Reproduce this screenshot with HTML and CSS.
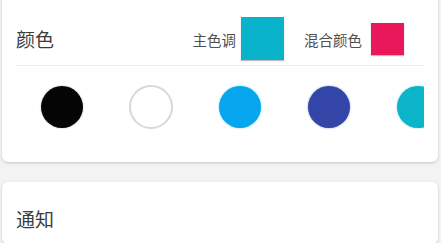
FILE: index.html
```html
<!DOCTYPE html>
<html lang="zh">
<head>
<meta charset="utf-8">
<link rel="stylesheet" href="styles.css">
</head>
<body>
<section class="card card-color">
  <div class="header">
    <span class="title">颜色</span>
    <div class="pickers">
      <span class="label">主色调</span>
      <span class="swatch swatch-primary"></span>
      <span class="label label-mix">混合颜色</span>
      <span class="swatch swatch-accent"></span>
    </div>
  </div>
  <div class="circles">
    <span class="dot dot-black"></span>
    <span class="dot dot-white"></span>
    <span class="dot dot-blue"></span>
    <span class="dot dot-indigo"></span>
    <span class="dot dot-teal"></span>
  </div>
</section>
<section class="card card-notice">
  <div class="header header-notice">
    <span class="title">通知</span>
  </div>
</section>
</body>
</html>
```
FILE: styles.css
```css
html, body {
  margin: 0;
  padding: 0;
}
body {
  background: #f3f3f3;
  font-family: "Noto Sans CJK SC", "Noto Sans", sans-serif;
  width: 441px;
  height: 243px;
  overflow: hidden;
}
.card {
  background: #fff;
  margin: 0 3px 0 2px;
  border-radius: 6px;
  box-shadow: 0 1px 3px rgba(0,0,0,0.18);
  padding: 0 14px;
}
.card-color {
  margin-top: -8px;
  padding-top: 8px;
}
.header {
  display: flex;
  align-items: center;
  justify-content: space-between;
  padding: 17px 0 5px;
  border-bottom: 1px solid #ececec;
}
.title {
  font-size: 19px;
  color: #3c3c3c;
  line-height: 24px;
  margin-top: 1px;
}
.pickers {
  display: flex;
  align-items: center;
}
.label {
  font-size: 14.5px;
  color: #505050;
  margin-top: 1px;
}
.swatch {
  display: block;
  box-shadow: 0 1px 1px rgba(0,0,0,0.25);
}
.swatch-primary {
  width: 43px;
  height: 43px;
  background: #08b3cb;
  margin-left: 5px;
}
.label-mix {
  margin-left: 20px;
}
.swatch-accent {
  width: 33px;
  height: 32px;
  background: #e9185b;
  margin-left: 9px;
  margin-right: 20px;
}
.circles {
  display: flex;
  gap: 47px;
  padding: 20px 0 34px 25px;
  overflow: hidden;
}
.dot {
  flex: none;
  width: 42px;
  height: 42px;
  border-radius: 50%;
  box-sizing: border-box;
}
.dot-black { background: #050505; box-shadow: 0 0 2px rgba(0,0,0,0.3); }
.dot-white { width: 44px; height: 44px; margin: -1px; background: #fff; border: 2px solid #d8d8d8; }
.dot-blue { background: #06a6ee; box-shadow: 0 0 2px rgba(6,166,238,0.6); }
.dot-indigo { background: #3346a8; box-shadow: 0 0 2px rgba(51,70,168,0.6); }
.dot-teal { background: #0bb4c8; box-shadow: 0 0 2px rgba(11,180,200,0.6); }
.card-notice {
  margin-top: 20px;
}
.header-notice {
  padding: 24px 0 12px;
}
```
